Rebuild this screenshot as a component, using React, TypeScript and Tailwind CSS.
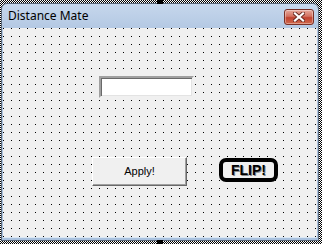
import React from "react";

function CloseX() {
  return (
    <svg width="12" height="10" viewBox="0 0 12 10">
      <path d="M2 1.5 L10 8.5 M10 1.5 L2 8.5" stroke="#6b2a22" strokeWidth="4" strokeLinecap="square" />
      <path d="M2 1.5 L10 8.5 M10 1.5 L2 8.5" stroke="#ffffff" strokeWidth="2.2" strokeLinecap="square" />
    </svg>
  );
}

function DotGrid() {
  return (
    <svg className="absolute inset-0 w-full h-full pointer-events-none" shapeRendering="crispEdges">
      <defs>
        <pattern id="dots" x="0" y="0" width="8" height="8" patternUnits="userSpaceOnUse">
          <rect x="0" y="0" width="1" height="1" fill="#000" />
        </pattern>
      </defs>
      <rect width="100%" height="100%" fill="url(#dots)" />
    </svg>
  );
}

export default function App() {
  return (
    <div className="relative w-[322px] h-[244px] overflow-hidden bg-[conic-gradient(#000_25%,#fff_0_50%,#000_0_75%,#fff_0)] bg-[length:2px_2px] pt-[3px] pl-[1px] pr-[3px] pb-[3px]">
      <div className="absolute left-[157px] top-0 w-[6px] h-[4px] bg-black" />
      <div className="absolute left-[157px] bottom-0 w-[6px] h-[4px] bg-black" />
      <div className="h-full flex flex-col rounded-t-[6px] border border-[#5b6878] bg-[linear-gradient(#c6d7ec,#b3c8e3_25px,#a9c1de)]">
        <div className="h-[24px] flex items-start justify-between pl-[6px] pr-[4px]">
          <span
            className="mt-[4px] leading-[16px] text-black"
            style={{ fontFamily: '"Segoe UI", "Noto Sans", sans-serif', fontSize: "12px" }}
          >
            Distance Mate
          </span>
          <div className="mt-[5px] w-[30px] h-[16px] rounded-[3px] border border-[#7a2f25] bg-[linear-gradient(#e7a99c,#d2705f_45%,#c1412f_55%,#d06a4e)] flex items-center justify-center shadow-[inset_0_0_0_1px_rgba(255,255,255,0.35)]">
            <CloseX />
          </div>
        </div>
        <div className="flex-1 mx-[1px] mb-[2px] border-b border-[#dbe8f5] relative">
          <div className="relative h-full bg-[#f0f0f0] flex flex-col pt-[48px]">
            <DotGrid />
            <div className="relative ml-[96px] w-[95px] h-[22px] bg-white border-2 border-t-[#a0a0a0] border-l-[#a0a0a0] border-b-[#f0f0f0] border-r-[#f0f0f0] shadow-[inset_1px_1px_0_#696969,inset_-1px_-1px_0_#e3e3e3]" />
            <div className="relative flex items-start mt-[59px]">
              <div
                className="ml-[89px] w-[95px] h-[29px] bg-[#f0f0f0] border border-t-white border-l-white border-r-[#696969] border-b-[#696969] shadow-[inset_-1px_-1px_0_#a0a0a0] flex items-center justify-center text-[11px] text-black"
                style={{ fontFamily: '"Liberation Sans", Arial, sans-serif' }}
              >
                Apply!
              </div>
              <div
                className="ml-[32px] mt-[1px] w-[59px] h-[24px] rounded-[7px] border-[4px] border-black bg-[#f0f0f0] flex items-center justify-center text-[14px] font-bold text-black leading-none"
                style={{ fontFamily: '"Liberation Sans", Arial, sans-serif', textShadow: "1px 1px 0 #8a8a8a" }}
              >
                FLIP!
              </div>
            </div>
          </div>
        </div>
      </div>
    </div>
  );
}
